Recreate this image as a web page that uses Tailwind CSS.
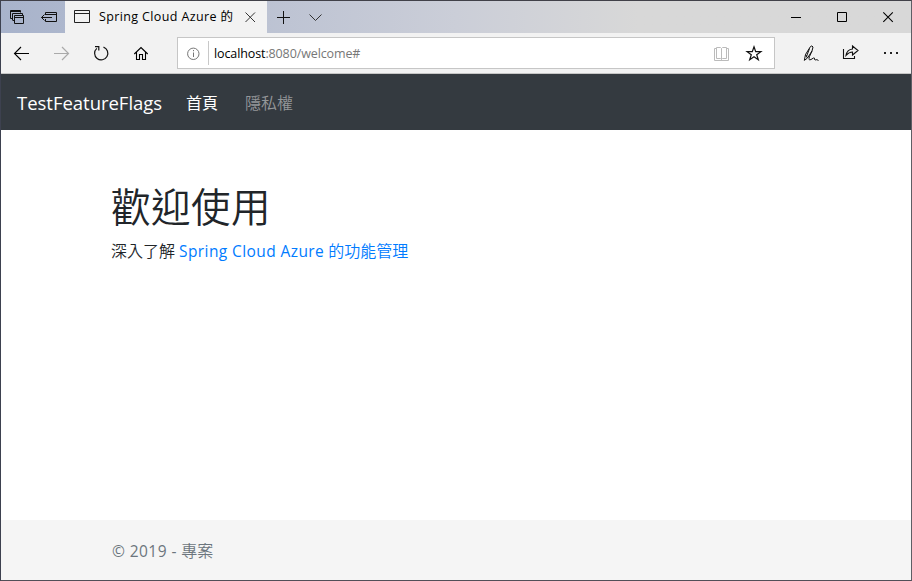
<!DOCTYPE html>
<html lang="zh-Hant">
<head>
<meta charset="utf-8">
<title>Spring Cloud Azure 的功能管理</title>
<script src="https://cdn.jsdelivr.net/npm/@tailwindcss/browser@4"></script>
</head>
<body class="w-[912px] h-[581px] overflow-hidden bg-white font-['Open_Sans','Noto_Sans_CJK_TC',sans-serif]">
<div class="w-[912px] h-[581px] flex flex-col border border-t-[#414149] border-r-[#5e5e65] border-b-[#514f58] border-l-[#3d414f] whitespace-nowrap">
  <!-- Title bar -->
  <div class="h-8 shrink-0 flex bg-linear-to-r from-[#a8b3cb] via-[#cbced8] via-50% to-[#d8d8d8] to-70%">
    <svg class="w-8 h-8" viewBox="1 1 32 32" fill="none" stroke="#111"><path d="M12.500 18.500h-2v-8h10v2M10.500 11.500h10M12.500 20.500v-7h10v2M13 20.500h1.500"/><path d="M14.500 15.500h9v8h-9zM14.500 17.500h9"/></svg>
    <svg class="w-8 h-8" viewBox="33 1 32 32" fill="none" stroke="#111"><path d="M45.500 15v-2.500h11v9h-11V19M45.500 14.500h11M41.500 17.500H52M44.500 14.500l-3 3 3 3"/></svg>
    <div class="w-[202px] h-8 flex items-center bg-[#f2f2f2]">
      <svg class="w-[34px] h-8 shrink-0" viewBox="65 1 34 32" fill="none" stroke="#222"><path d="M74.500 10.500h15v12h-15zM74.500 13.500h15"/></svg>
      <span class="w-[135px] text-[12.5px] leading-8 tracking-[0.37px] text-black">Spring Cloud Azure 的</span>
      <svg class="w-[33px] h-8 shrink-0" viewBox="234 1 33 32" fill="none" stroke="#333"><path d="M245.500 12.500l9.500 9.500M255 12.500l-9.500 9.500"/></svg>
    </div>
    <svg class="w-8 h-8" viewBox="267 1 32 32" fill="none" stroke="#111"><path d="M277 17.500h13M283.500 11v13"/></svg>
    <svg class="w-8 h-8" viewBox="299 1 32 32" fill="none" stroke="#333"><path d="M309.500 14.500l6 6 6-6"/></svg>
    <div class="flex-1"></div>
    <svg class="w-[46px] h-8" viewBox="773 1 46 32" stroke="#000"><path d="M791 17.500h10"/></svg>
    <svg class="w-[46px] h-8" viewBox="819 1 46 32" fill="none" stroke="#000"><path d="M837.500 12.500h9v9h-9z"/></svg>
    <svg class="w-[46px] h-8" viewBox="865 1 46 32" fill="none" stroke="#000" stroke-width="1.100"><path d="M883.300 12.300l9.500 9.500M892.800 12.300l-9.500 9.500"/></svg>
  </div>
  <!-- Toolbar -->
  <div class="h-[41px] shrink-0 flex bg-[#f2f2f2] border-b border-[#c6c6c6]">
    <svg class="w-10 h-10" viewBox="1 33 40 40" fill="none" stroke="#000" stroke-width="1.100"><path d="M14.500 53.500H29M21 47l-6.500 6.500L21 60"/></svg>
    <svg class="w-10 h-10" viewBox="41 33 40 40" fill="none" stroke="#aaa" stroke-width="1.200"><path d="M54 53.500h14.500M62 47l6.500 6.500L62 60"/></svg>
    <svg class="w-10 h-10" viewBox="81 33 40 40" fill="none" stroke="#111" stroke-width="1.200"><path d="M103.500 47.100A6.600 6.600 0 1 1 96.800 48.400M95 46.700h3.800v3.800"/></svg>
    <svg class="w-10 h-10" viewBox="121 33 40 40" fill="none" stroke="#000" stroke-width="1.100"><path d="M134.300 54l6.700-6.500 6.700 6.500M136.500 52v7.500h3v-5h3v5h3V52"/></svg>
    <div class="w-[598px] h-8 mt-1 ml-4 flex items-center border border-[#c6c6c6] bg-white">
      <svg class="w-[30px] h-[30px] shrink-0" viewBox="178 38 30 30" fill="none" stroke="#777"><circle cx="193.300" cy="53.800" r="5.700"/><path d="M193.500 52.500v4.500M193.500 50v1.200"/></svg>
      <div class="w-px h-6 bg-[#c8c8c8]"></div>
      <span class="ml-[5px] pt-0.5 text-[12.500px] tracking-[-0.110px] leading-7 text-[#777]"><span class="text-black">localhost</span>:8080/welcome#</span>
      <div class="flex-1"></div>
      <svg class="w-8 h-[30px]" viewBox="706 38 32 30" fill="none" stroke="#bbb"><path d="M716.500 48.500h-2v12h14v-12h-2M716.500 47.500h4l1 1 1-1h4v11h-4l-1 1-1-1h-4zM721.500 48.500v11"/></svg>
      <svg class="w-9 h-[30px]" viewBox="738 38 36 30" fill="none" stroke="#111" stroke-width="1.200"><path d="M754 46.800l1.700 4.900h5.200l-4.200 3.100 1.600 5-4.300-3.100-4.300 3.100 1.600-5-4.200-3.100h5.200z"/></svg>
    </div>
    <div class="flex-1"></div>
    <svg class="w-10 h-10" viewBox="791 33 40 40" fill="none" stroke="#111" stroke-width="1"><path d="M804.300 60.500l1.200-6 5-8q1.500-1.500 2.500.5l-1 4-4.500 7-3 2.300M805.500 54.500l2 3.500M809.500 48.500l-3 8M812 51l-2.500 5.500q-1.500 4.500 1.500 3l2.500-1.500q1.500-.5 1 1.500l.5.500q2-1 3.500.5"/></svg>
    <svg class="w-10 h-10" viewBox="831 33 40 40" fill="none" stroke="#111" stroke-width="1.100"><path d="M843.500 49v9.500h11V56M846 55.500q1-6 6.500-6.500v-3l5.500 4.500-5.500 4.500v-3q-3.500 0-6.500 3.500z"/></svg>
    <svg class="w-10 h-10" viewBox="871 33 40 40" fill="#222"><path d="M884 52h2v2h-2zM890 52h2v2h-2zM896 52h2v2h-2z"/></svg>
  </div>
  <!-- Site navigation -->
  <nav class="h-14 shrink-0 flex items-center pl-4 pt-px bg-[#343a40]">
    <a class="w-[169px] text-[18.500px] tracking-[-0.020px] text-white">TestFeatureFlags</a>
    <a class="w-[59px] text-[16px] text-white">首頁</a>
    <a class="text-[16px] text-[#94979a] font-[350]">隱私權</a>
  </nav>
  <main class="flex-1 pl-[110px] pt-[53px] text-[#212529]">
    <h1 class="text-[39.500px] tracking-[0.500px] leading-[48px] font-[350]">歡迎使用</h1>
    <p class="mt-2 text-[15.500px] leading-6"><span class="text-[16px] font-[350]">深入了解</span> <a class="text-[#007bff]"><span class="tracking-[0.410px]">Spring Cloud Azure</span> <span class="text-[16px] font-[350]">的功能管理</span></a></p>
  </main>
  <footer class="h-[60px] shrink-0 pl-[111px] pt-0.5 bg-[#f5f5f5] text-[15.500px] tracking-[0.430px] leading-[58px] text-[#6c757d]">© 2019 - <span class="text-[16px] tracking-normal font-[350]">專案</span></footer>
</div>
</body>
</html>
